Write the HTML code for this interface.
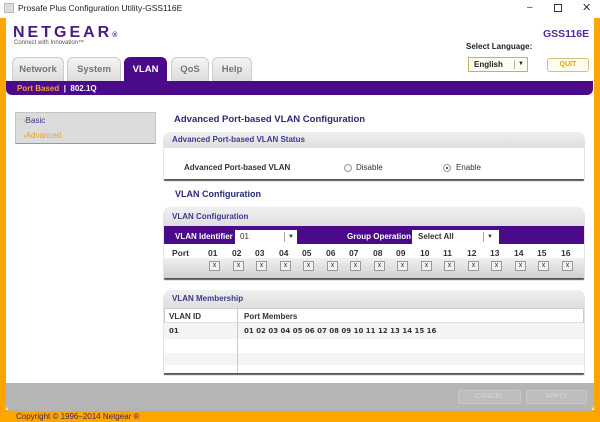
<!DOCTYPE html>
<html><head><style>
*{margin:0;padding:0;box-sizing:border-box}
body{width:600px;height:422px;position:relative;overflow:hidden;font-family:"Liberation Sans",Arial,sans-serif;background:#fff}
.a{position:absolute}
.b{font-weight:bold}
.tab{position:absolute;top:57px;height:24px;background:linear-gradient(#f4f4f4,#dcdcdc);border:1px solid #ccc;border-bottom:none;border-radius:6px 6px 0 0;color:#777;font-weight:bold;font-size:9.5px;text-align:center;line-height:24px}
.box{position:absolute;left:164px;width:420px;background:#fff;border-radius:5px 5px 0 0;box-shadow:0 2px 1px #555}
.hd{height:17px;background:linear-gradient(#f0f0f0,#dedede);border-radius:5px 5px 0 0;color:#3a3a8c;font-size:8px;font-weight:bold;line-height:17px;padding-left:8px}
.x{position:absolute;top:261px;width:11px;height:10px;background:#f2f2f2;border:1px solid #999;font-size:7px;line-height:8px;text-align:center;color:#333}
.pn{position:absolute;top:248px;font-size:8.5px;font-weight:bold;color:#333}
</style></head><body>
<div class="a" style="left:4px;top:3px;width:10px;height:10px;background:#ddd;border:1px solid #bbb"></div>
<div class="a" style="left:18px;top:3px;font-size:8.5px;color:#222">Prosafe Plus Configuration Utility-GSS116E</div>
<div class="a" style="left:527px;top:2px;font-size:10px;color:#333">–</div>
<div class="a" style="left:554px;top:4px;width:8px;height:8px;border:1px solid #333"></div>
<div class="a" style="left:582px;top:1px;font-size:11px;color:#333">✕</div>
<div class="a" style="left:0;top:18px;width:6px;height:404px;background:#ffa500"></div>
<div class="a" style="left:594px;top:18px;width:6px;height:404px;background:#ffa500"></div>
<div class="a" style="left:0;top:410px;width:600px;height:12px;background:#ffa500"></div>
<div class="a" style="left:6px;top:383px;width:588px;height:28px;background:#b5b5b5;border-radius:0 0 6px 6px"></div>
<div class="a" style="left:16px;top:412px;font-size:8px;color:#3a2a6a">Copyright © 1996–2014 Netgear ®</div>
<div class="a b" style="left:13px;top:24px;font-size:16px;letter-spacing:3px;color:#4b1a82">NETGEAR<span style="font-size:7px;letter-spacing:0">®</span></div>
<div class="a" style="left:14px;top:40px;font-size:6px;color:#555">Connect with Innovation™</div>
<div class="a b" style="left:543px;top:28px;font-size:10.5px;color:#5a2a9a">GSS116E</div>
<div class="a b" style="left:466px;top:42px;font-size:8px;color:#222">Select Language:</div>
<div class="a" style="left:468px;top:57px;width:60px;height:15px;border:1px solid #c8b060;background:#fffdf2;font-size:8px;font-weight:bold;line-height:13px;padding-left:5px;color:#222">English<span style="position:absolute;left:45px;top:2px;height:9px;border-left:1px solid #bbb;font-size:6px;line-height:9px;padding-left:3px">▼</span></div>
<div class="a" style="left:547px;top:58px;width:42px;height:14px;border:1px solid #d4c080;border-radius:3px;background:#fffdf0;font-size:7px;font-weight:bold;color:#e8a000;text-align:center;line-height:12px">QUIT</div>
<div class="tab" style="left:12px;width:52px">Network</div>
<div class="tab" style="left:67px;width:54px">System</div>
<div class="tab" style="left:124px;width:43px;background:#4a0a8a;border-color:#4a0a8a;color:#fff">VLAN</div>
<div class="tab" style="left:171px;width:38px">QoS</div>
<div class="tab" style="left:212px;width:40px">Help</div>
<div class="a" style="left:6px;top:81px;width:587px;height:14px;background:#4a0a8a;border-radius:0 0 6px 6px"></div>
<div class="a b" style="left:17px;top:84px;font-size:8px;color:#f0a040">Port Based <span style="color:#fff">&nbsp;|&nbsp; 802.1Q</span></div>
<div class="a" style="left:15px;top:112px;width:141px;height:32px;background:#dcdcdc;border:1px solid #c4c4c4;border-bottom-color:#999"></div>
<div class="a" style="left:23px;top:116px;font-size:8px;color:#333a8a"><span style="color:#e8a000">›</span>Basic</div>
<div class="a" style="left:23px;top:131px;font-size:8px;color:#f0a020">›Advanced</div>
<div class="a b" style="left:174px;top:114px;font-size:9.5px;color:#2a2a7a">Advanced Port-based VLAN Configuration</div>
<div class="box" style="top:132px;height:47px">
<div class="hd" style="height:16px;line-height:16px">Advanced Port-based VLAN Status</div>
<div class="a b" style="left:20px;top:31px;font-size:8px;color:#333">Advanced Port-based VLAN</div>
<div class="a" style="left:180px;top:32px;width:8px;height:8px;border:1px solid #999;border-radius:50%"></div>
<div class="a" style="left:192px;top:31px;font-size:8px;color:#333">Disable</div>
<div class="a" style="left:279px;top:32px;width:8px;height:8px;border:1px solid #999;border-radius:50%"><div style="position:absolute;left:2px;top:2px;width:2px;height:2px;background:#333;border-radius:50%"></div></div>
<div class="a" style="left:292px;top:31px;font-size:8px;color:#333">Enable</div>
</div>
<div class="a b" style="left:175px;top:189px;font-size:9px;color:#2a2a7a">VLAN Configuration</div>
<div class="box" style="top:207px;height:71px;background:#fff">
<div class="hd" style="height:19px;line-height:19px">VLAN Configuration</div>
<div style="height:18px;background:#4a0a8a"></div>
<div style="position:absolute;top:51px;left:0;width:420px;height:20px;background:linear-gradient(#f0f0f0,#d0d0d0)"></div>
<div class="a b" style="left:11px;top:25px;font-size:8px;color:#fff">VLAN Identifier</div>
<div class="a" style="left:71px;top:23px;width:62px;height:14px;background:#fff;font-size:8px;line-height:14px;padding-left:5px;color:#333">01<span style="position:absolute;left:49px;top:2px;height:10px;border-left:1px solid #aaa;font-size:6px;line-height:10px;padding-left:3px">▼</span></div>
<div class="a b" style="left:183px;top:25px;font-size:8px;color:#fff">Group Operation</div>
<div class="a" style="left:248px;top:23px;width:87px;height:14px;background:#fff;font-size:8px;font-weight:bold;line-height:14px;padding-left:6px;color:#333">Select All<span style="position:absolute;left:71px;top:2px;height:10px;border-left:1px solid #aaa;font-size:6px;line-height:10px;padding-left:3px">▼</span></div>
</div>
<div class="pn" style="left:172px">Port</div>
<div class="pn" style="left:208px">01</div><div class="pn" style="left:232px">02</div><div class="pn" style="left:255px">03</div><div class="pn" style="left:279px">04</div><div class="pn" style="left:302px">05</div><div class="pn" style="left:326px">06</div><div class="pn" style="left:349px">07</div><div class="pn" style="left:373px">08</div><div class="pn" style="left:396px">09</div><div class="pn" style="left:420px">10</div><div class="pn" style="left:443px">11</div><div class="pn" style="left:467px">12</div><div class="pn" style="left:490px">13</div><div class="pn" style="left:514px">14</div><div class="pn" style="left:537px">15</div><div class="pn" style="left:561px">16</div>
<div class="x" style="left:209px">x</div><div class="x" style="left:233px">x</div><div class="x" style="left:256px">x</div><div class="x" style="left:280px">x</div><div class="x" style="left:303px">x</div><div class="x" style="left:327px">x</div><div class="x" style="left:350px">x</div><div class="x" style="left:374px">x</div><div class="x" style="left:397px">x</div><div class="x" style="left:421px">x</div><div class="x" style="left:444px">x</div><div class="x" style="left:468px">x</div><div class="x" style="left:491px">x</div><div class="x" style="left:515px">x</div><div class="x" style="left:538px">x</div><div class="x" style="left:562px">x</div>
<div class="box" style="top:290px;height:83px">
<div class="hd" style="height:18px;line-height:18px">VLAN Membership</div>
<div style="position:absolute;top:18px;left:0;width:420px;height:15px;border:1px solid #ccc;border-bottom:1px solid #ddd;background:#fff"></div>
<div style="position:absolute;top:33px;left:0;width:420px;height:16px;background:#f4f4f4"></div>
<div style="position:absolute;top:63px;left:0;width:420px;height:12px;background:#f4f4f4"></div>
<div style="position:absolute;top:18px;left:73px;width:1px;height:65px;background:#ccc"></div>
<div class="a b" style="left:5px;top:22px;font-size:8px;color:#333">VLAN ID</div>
<div class="a b" style="left:80px;top:22px;font-size:8px;color:#333">Port Members</div>
<div class="a b" style="left:5px;top:37px;color:#333;font-family:'DejaVu Sans',sans-serif;font-size:7px">01</div>
<div class="a b" style="left:80px;top:37px;font-size:7px;color:#333;font-family:'DejaVu Sans',sans-serif">01 02 03 04 05 06 07 08 09 10 11 12 13 14 15 16</div>
</div>
<div class="a" style="left:458px;top:390px;width:63px;height:14px;border:1px solid #c8c8c8;background:#bdbdbd;font-size:7px;color:#d8d8d8;text-align:center;line-height:12px;border-radius:2px">CANCEL</div>
<div class="a" style="left:526px;top:390px;width:61px;height:14px;border:1px solid #c8c8c8;background:#bdbdbd;font-size:7px;color:#d8d8d8;text-align:center;line-height:12px;border-radius:2px">APPLY</div>
</body></html>
